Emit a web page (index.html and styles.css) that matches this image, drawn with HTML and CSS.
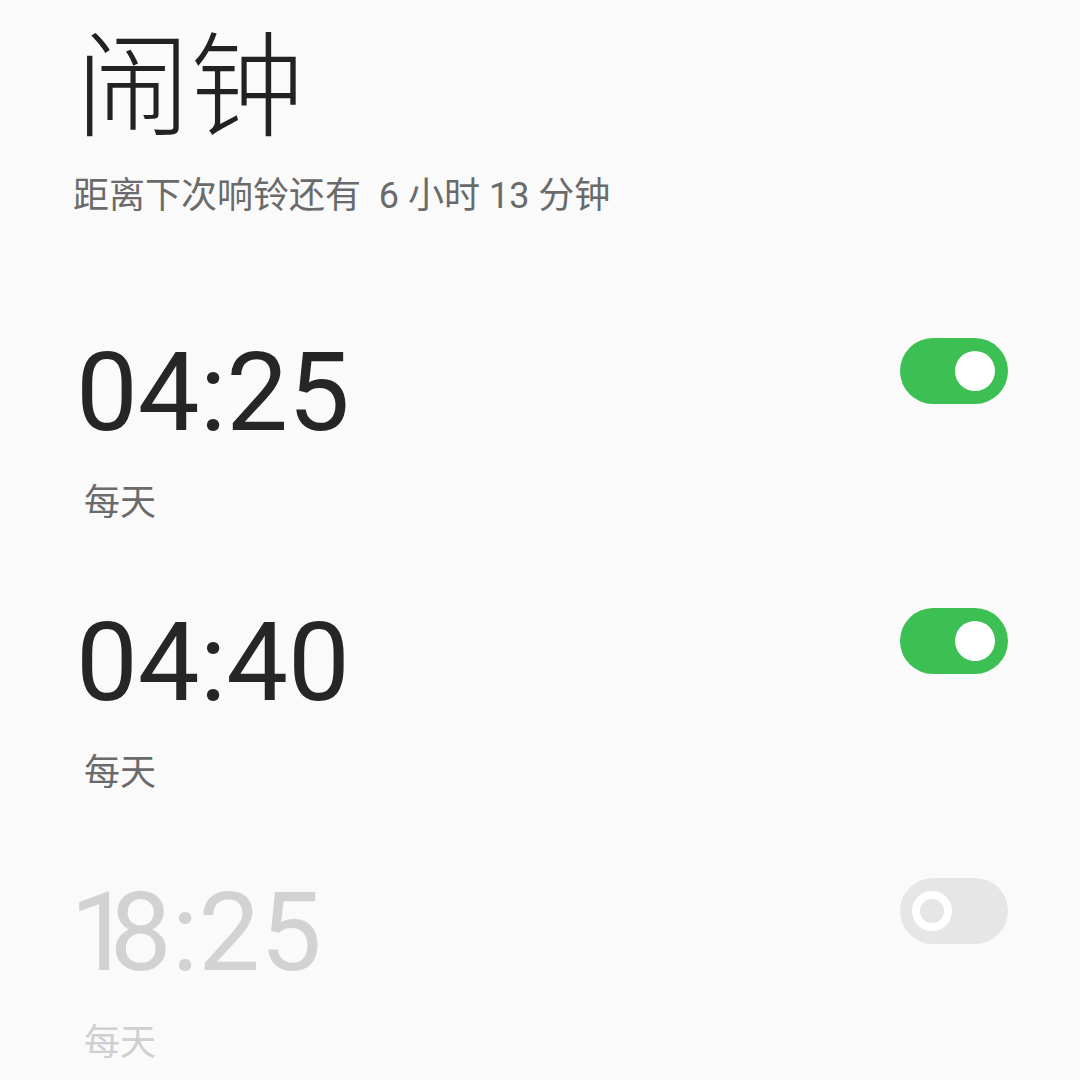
FILE: index.html
```html
<!DOCTYPE html>
<html lang="zh-CN">
<head>
<meta charset="utf-8">
<title>闹钟</title>
<link rel="stylesheet" href="styles.css">
</head>
<body>
<main class="page">
  <header class="header">
    <h1 class="title">闹钟</h1>
    <p class="subtitle">距离下次响铃还有&nbsp; 6 小时 13 分钟</p>
  </header>
  <ul class="alarms">
    <li class="alarm">
      <div class="alarm-info">
        <div class="alarm-time">04:25</div>
        <div class="alarm-repeat">每天</div>
      </div>
      <div class="toggle on"><span class="knob"></span></div>
    </li>
    <li class="alarm">
      <div class="alarm-info">
        <div class="alarm-time">04:40</div>
        <div class="alarm-repeat">每天</div>
      </div>
      <div class="toggle on"><span class="knob"></span></div>
    </li>
    <li class="alarm off">
      <div class="alarm-info">
        <div class="alarm-time"><span class="narrow-one">1</span>8:25</div>
        <div class="alarm-repeat">每天</div>
      </div>
      <div class="toggle"><span class="knob"></span></div>
    </li>
  </ul>
</main>
</body>
</html>
```
FILE: styles.css
```css
* { box-sizing: border-box; }
html, body {
  margin: 0;
  padding: 0;
  background: #fafafa;
}
body {
  font-family: Roboto, "Noto Sans CJK SC", sans-serif;
}
.page {
  padding: 0 72px 0 76px;
}
.header {
  padding-top: 4px;
}
.title {
  margin: 0;
  font-family: "Noto Sans CJK SC", sans-serif;
  font-weight: 300;
  font-size: 114px;
  line-height: 148px;
  color: #222222;
}
.subtitle {
  margin: 22px 0 0 -3px;
  font-size: 36px;
  line-height: 44px;
  color: #6a6a6a;
}
.alarms {
  list-style: none;
  margin: 0;
  padding: 0;
  margin-top: 120px;
}
.alarm {
  display: flex;
  justify-content: space-between;
  align-items: flex-start;
  height: 270px;
}
.alarm:last-child {
  height: auto;
}
.alarm-info {
  display: flex;
  flex-direction: column;
}
.alarm-time {
  font-size: 110px;
  line-height: 110px;
  color: #262626;
}
.alarm-repeat {
  margin-top: 31px;
  margin-left: 8px;
  font-family: "Noto Sans CJK SC", sans-serif;
  font-size: 36px;
  line-height: 40px;
  color: #6a6a6a;
}
.alarm.off .alarm-time { color: #d2d2d2; margin-left: -6px; }
.alarm.off .alarm-repeat { color: #cfcfcf; }
.narrow-one { letter-spacing: -22px; }
.toggle {
  width: 108px;
  height: 66px;
  border-radius: 33px;
  background: #e6e6e6;
  display: flex;
  align-items: center;
  padding: 0 12px;
}
.knob {
  width: 40px;
  height: 40px;
  border-radius: 50%;
  background: #e6e6e6;
  border: 8px solid #ffffff;
}
.toggle.on {
  background: #3cbf53;
  justify-content: flex-end;
  padding: 0 13px;
}
.toggle.on .knob {
  background: #ffffff;
  border: none;
}
```
